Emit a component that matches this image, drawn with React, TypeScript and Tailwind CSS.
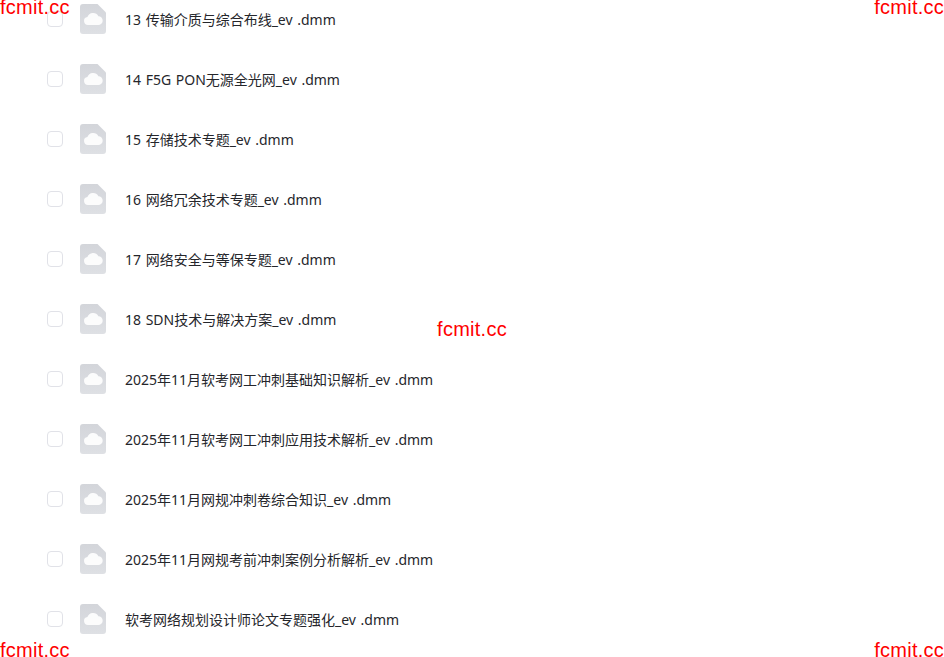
import React from 'react';

const files = [
  '13 传输介质与综合布线_ev .dmm',
  '14 F5G PON无源全光网_ev .dmm',
  '15 存储技术专题_ev .dmm',
  '16 网络冗余技术专题_ev .dmm',
  '17 网络安全与等保专题_ev .dmm',
  '18 SDN技术与解决方案_ev .dmm',
  '2025年11月软考网工冲刺基础知识解析_ev .dmm',
  '2025年11月软考网工冲刺应用技术解析_ev .dmm',
  '2025年11月网规冲刺卷综合知识_ev .dmm',
  '2025年11月网规考前冲刺案例分析解析_ev .dmm',
  '软考网络规划设计师论文专题强化_ev .dmm',
];

const FileIcon: React.FC = () => (
  <svg width="26" height="30" viewBox="0 0 26 30" className="shrink-0">
    <defs>
      <linearGradient id="fileFill" x1="0" y1="0" x2="0" y2="1">
        <stop offset="0" stopColor="#d3d5da" />
        <stop offset="1" stopColor="#dee0e4" />
      </linearGradient>
    </defs>
    <path
      d="M3 0H17.5L26 8.5V27a3 3 0 0 1-3 3H3a3 3 0 0 1-3-3V3a3 3 0 0 1 3-3Z"
      fill="url(#fileFill)"
    />
    <path
      d="M8 21a4 4 0 0 1-.6-7.95A6 6 0 0 1 18.4 12.2 4.4 4.4 0 0 1 18.2 21H8Z"
      fill="#ffffff"
      fillOpacity="0.9"
    />
  </svg>
);

const Watermark: React.FC = () => (
  <span className="text-[20px] leading-[14px] tracking-[0.25px] text-[#ff0000] font-['Liberation_Sans',sans-serif]">
    fcmit.cc
  </span>
);

const App: React.FC = () => {
  return (
    <div className="relative h-[657px] w-[944px] overflow-hidden bg-white font-['Noto_Sans','Noto_Sans_CJK_SC',sans-serif]">
      <ul className="-mt-[11px] pl-[47px]">
        {files.map(name => (
          <li key={name} className="flex h-[60px] items-center">
            <span className="h-4 w-4 shrink-0 rounded-[4px] border border-[#e1e2e8] bg-white" />
            <span className="ml-[17px]">
              <FileIcon />
            </span>
            <span className="ml-[19px] pt-0.5 text-sm leading-5 [word-spacing:1px] text-[#25262b]">{name}</span>
          </li>
        ))}
      </ul>
      <div className="absolute inset-0 flex flex-col justify-between">
        <div className="flex justify-between">
          <Watermark />
          <Watermark />
        </div>
        <div className="flex justify-center">
          <Watermark />
        </div>
        <div className="flex justify-between">
          <Watermark />
          <Watermark />
        </div>
      </div>
    </div>
  );
};

export default App;
